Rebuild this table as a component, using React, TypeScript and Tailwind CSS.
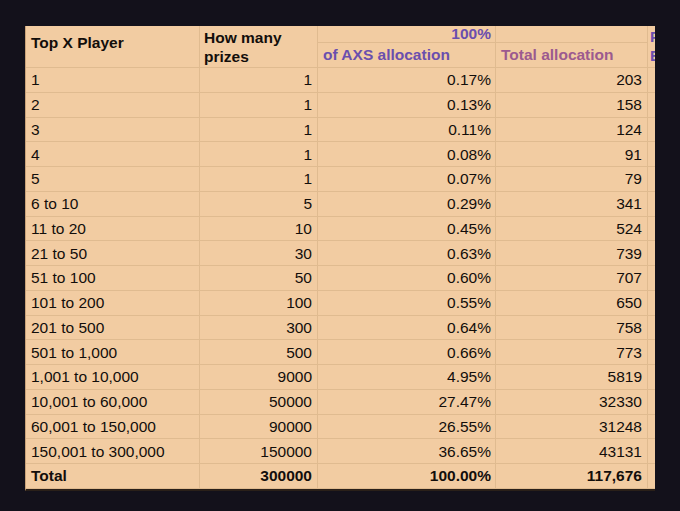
const rows: [string, string, string, string][] = [
  ["1", "1", "0.17%", "203"],
  ["2", "1", "0.13%", "158"],
  ["3", "1", "0.11%", "124"],
  ["4", "1", "0.08%", "91"],
  ["5", "1", "0.07%", "79"],
  ["6 to 10", "5", "0.29%", "341"],
  ["11 to 20", "10", "0.45%", "524"],
  ["21 to 50", "30", "0.63%", "739"],
  ["51 to 100", "50", "0.60%", "707"],
  ["101 to 200", "100", "0.55%", "650"],
  ["201 to 500", "300", "0.64%", "758"],
  ["501 to 1,000", "500", "0.66%", "773"],
  ["1,001 to 10,000", "9000", "4.95%", "5819"],
  ["10,001 to 60,000", "50000", "27.47%", "32330"],
  ["60,001 to 150,000", "90000", "26.55%", "31248"],
  ["150,001 to 300,000", "150000", "36.65%", "43131"],
];

const cell = "flex items-center border-r border-b border-[#e0bb90] overflow-hidden whitespace-nowrap";

const Row = ({ data, bold }: { data: [string, string, string, string]; bold?: boolean }) => (
  <div
    className={`grid h-[24.75px] grid-cols-[174px_118px_178px_152px_8px] ${bold ? "font-bold" : ""}`}
  >
    <div className={`${cell} pl-[5px]`}>{data[0]}</div>
    <div className={`${cell} justify-end pr-[5px]`}>{data[1]}</div>
    <div className={`${cell} justify-end pr-[4px]`}>{data[2]}</div>
    <div className={`${cell} justify-end pr-[5px]`}>{data[3]}</div>
    <div className="border-b border-[#e0bb90]" />
  </div>
);

export default function App() {
  return (
    <div className="min-h-[511px] bg-[#13111b] pl-[25px] pt-[26px]">
      <div className="w-[630px] overflow-hidden border-l border-[#c9a279] border-b-2 border-b-[#2a2019] bg-[#f2cca2] font-['Liberation_Sans',Arial,sans-serif] text-[15.5px] text-[#120e0b]">
        {/* header */}
        <div className="grid h-[42px] grid-cols-[174px_118px_178px_152px_8px] grid-rows-[17px_25px] font-bold">
          <div className="row-span-2 border-r border-b border-[#e0bb90] pl-[5px] pt-[8px] leading-[18px]">
            Top X Player
          </div>
          <div className="row-span-2 border-r border-b border-[#e0bb90] pl-[4px] pt-[2px] leading-[19px]">
            How many
            <br />
            prizes
          </div>
          <div className="flex items-center justify-end overflow-hidden border-r border-b border-[#e0bb90] pr-[4px] leading-[17px] text-[#6a4fae]">
            <span className="-mt-[2px]">100%</span>
          </div>
          <div className="border-r border-b border-[#e0bb90]" />
          <div className="row-span-2 overflow-hidden border-b border-[#e0bb90] pl-[2px] pt-[1px] leading-[19px] text-[#6a4fae]">
            P
            <br />E
          </div>
          <div className="flex items-center overflow-hidden whitespace-nowrap border-r border-b border-[#e0bb90] pl-[5px] text-[#6a4fae]">
            of AXS allocation
          </div>
          <div className="flex items-center overflow-hidden whitespace-nowrap border-r border-b border-[#e0bb90] pl-[5px] text-[#9c5a8f]">
            Total allocation
          </div>
        </div>
        {rows.map((r) => (
          <Row key={r[0]} data={r} />
        ))}
        <Row data={["Total", "300000", "100.00%", "117,676"]} bold />
      </div>
    </div>
  );
}
